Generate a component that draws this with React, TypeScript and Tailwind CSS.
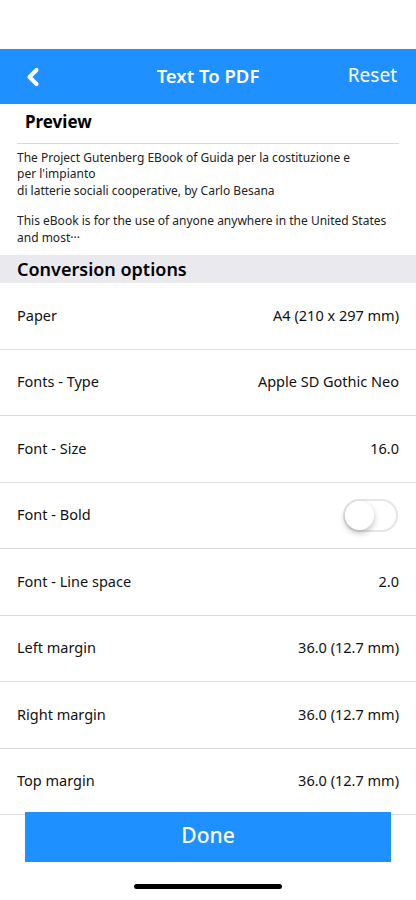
import { ChevronLeft } from "lucide-react"

const rows = [
  { label: "Paper", value: "A4 (210 x 297 mm)" },
  { label: "Fonts - Type", value: "Apple SD Gothic Neo" },
  { label: "Font - Size", value: "16.0" },
  { label: "Font - Bold", toggle: true },
  { label: "Font - Line space", value: "2.0" },
  { label: "Left margin", value: "36.0 (12.7 mm)" },
  { label: "Right margin", value: "36.0 (12.7 mm)" },
  { label: "Top margin", value: "36.0 (12.7 mm)" },
]

export default function App() {
  return (
    <div className="h-[900px] w-[416px] bg-white flex flex-col overflow-hidden text-black font-['Noto_Sans',sans-serif]">
      {/* status bar space */}
      <div className="h-[49px] shrink-0" />

      {/* Nav bar */}
      <div className="h-[55px] shrink-0 bg-[#1e90ff] grid grid-cols-[1fr_auto_1fr] items-center px-[19px] text-white">
        <ChevronLeft className="h-7 w-7" strokeWidth={3.5} />
        <span className="text-[18.5px] font-semibold pb-[2px]">Text To PDF</span>
        <span className="text-[19px] justify-self-end pb-[2px]">Reset</span>
      </div>

      {/* Preview */}
      <div className="px-[17px] shrink-0">
        <div className="pt-[5px] pb-[8px] pl-[8px] border-b border-[#d8d8d8] text-[17px] font-bold">Preview</div>
        <div className="pt-[6px] pb-[9px] text-[12px] leading-[16.5px] text-[#222]">
          <p>The Project Gutenberg EBook of Guida per la costituzione e</p>
          <p>per l'impianto</p>
          <p>di latterie sociali cooperative, by Carlo Besana</p>
          <p className="mt-[14px]">This eBook is for the use of anyone anywhere in the United States</p>
          <p>and most···</p>
        </div>
      </div>

      {/* Section header */}
      <div className="h-[28px] shrink-0 bg-[#e9e9ee] flex items-center px-[17px] text-[18px] font-semibold">
        Conversion options
      </div>

      {/* Options list */}
      <div className="flex-1 overflow-hidden">
        {rows.map((row) => (
          <div
            key={row.label}
            className="h-[66.5px] flex items-center justify-between px-[17px] pb-[0px] border-b border-[#dcdcdc] text-[14.5px] text-[#111]"
          >
            <span>{row.label}</span>
            {row.toggle ? (
              <div className="w-[55px] h-[33px] rounded-full border-2 border-[#e5e5ea] bg-white relative mr-[1px]">
                <div className="absolute left-0 top-0 h-[29px] w-[29px] rounded-full bg-white shadow-[0_3px_6px_rgba(0,0,0,0.25)]" />
              </div>
            ) : (
              <span>{row.value}</span>
            )}
          </div>
        ))}
      </div>

      {/* Done button */}
      <div className="shrink-0 px-[25px] -mt-[4px]">
        <button className="w-full h-[50px] bg-[#1e90ff] text-white text-[21px] font-medium pb-[2px]">Done</button>
      </div>
      <div className="h-[38px] shrink-0 flex items-start justify-center pt-[22px]">
        <div className="w-[148px] h-[5px] rounded-full bg-black" />
      </div>
    </div>
  )
}
